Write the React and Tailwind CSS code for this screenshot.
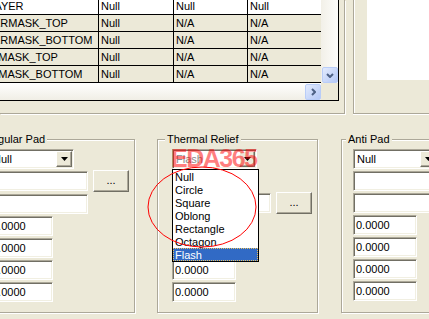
import React from 'react';

const sunken =
  'bg-white border border-t-[#aca899] border-l-[#aca899] border-r-white border-b-white shadow-[inset_1px_1px_0_#716f64,inset_-1px_-1px_0_#f1efe2]';
const raised =
  'bg-[#ece9d8] border border-t-white border-l-white border-r-[#716f64] border-b-[#716f64] shadow-[inset_-1px_-1px_0_#aca899]';

const rows = [
  { name: 'TOP LAYER', a: 'Null', b: 'Null', c: 'Null', selected: true },
  { name: 'SOLDERMASK_TOP', a: 'Null', b: 'N/A', c: 'N/A' },
  { name: 'SOLDERMASK_BOTTOM', a: 'Null', b: 'N/A', c: 'N/A' },
  { name: 'PASTEMASK_TOP', a: 'Null', b: 'N/A', c: 'N/A' },
  { name: 'PASTEMASK_BOTTOM', a: 'Null', b: 'N/A', c: 'N/A' },
];

const items = ['Null', 'Circle', 'Square', 'Oblong', 'Rectangle', 'Octagon', 'Flash'];

const ScrollBtn = ({ dir }) => (
  <div className="w-[16px] h-[16px] rounded-[2px] border border-[#b9cdf8] bg-gradient-to-br from-[#e3ebfd] to-[#b4c8f6] flex items-center justify-center">
    {dir === 'down' ? (
      <svg width="8" height="5" viewBox="0 0 8 5">
        <path d="M1 1L4 4L7 1" fill="none" stroke="#4d6185" strokeWidth="2" />
      </svg>
    ) : (
      <svg width="5" height="8" viewBox="0 0 5 8">
        <path d="M1 1L4 4L1 7" fill="none" stroke="#4d6185" strokeWidth="2" />
      </svg>
    )}
  </div>
);

const Combo = ({ value, gray, children }) => (
  <div className={`relative w-[85px] h-[20px] shrink-0 ${sunken} flex items-center pl-[3px]`}>
    <span className={gray ? 'text-[#8c8c8c]' : ''}>{value}</span>
    <div className={`absolute right-[1px] top-[1px] w-[16px] h-[16px] ${raised} flex items-center justify-center`}>
      <svg width="7" height="4" viewBox="0 0 7 4">
        <path d="M0 0H7L3.5 4Z" fill="#000" />
      </svg>
    </div>
    {children}
  </div>
);

const Field = ({ w, value }) => (
  <div className={`${w} h-[20px] shrink-0 ${sunken} flex items-center pl-[2px]`}>{value}</div>
);

const Dots = () => (
  <div className={`w-[36px] h-[22px] -mt-[1px] ml-[5px] shrink-0 ${raised} flex items-center justify-center pb-[2px]`}>
    ...
  </div>
);

const Group = ({ label, labelLeft, pad, gap, children }) => (
  <div
    className={`relative ${gap} w-[161px] h-[174px] shrink-0 border border-[#aca899] shadow-[inset_1px_1px_0_#fff,1px_1px_0_#fff] ${pad} pt-[9px] flex flex-col gap-[2px]`}
  >
    <span className={`absolute -top-[7px] ${labelLeft} px-[2px] bg-[#ece9d8] leading-[13px] whitespace-nowrap`}>
      {label}
    </span>
    {children}
  </div>
);

const Numbers = () => (
  <>
    <Field w="w-[64px]" value="0.0000" />
    <Field w="w-[64px]" value="0.0000" />
    <Field w="w-[64px]" value="0.0000" />
    <Field w="w-[64px]" value="0.0000" />
  </>
);

export default function App() {
  return (
    <div className="relative w-[429px] h-[319px] overflow-hidden bg-[#ece9d8] font-['Liberation_Sans',Arial,sans-serif] text-[11px] leading-none text-black">
      {/* top: layer table + preview */}
      <div className="flex h-[114px]">
        <div className="w-[345px] shrink-0 border-r border-b border-[#aca899] shadow-[1px_1px_0_#fff]">
          <div className="ml-[-40px] mt-[-3px] w-[379px] border border-black flex flex-col">
            <div className="flex h-[85px]">
              <div className="w-[360px]">
                {rows.map((r) => (
                  <div
                    key={r.name}
                    className={`flex h-[17px] border-b border-black ${r.selected ? 'bg-white' : 'bg-[#ece9d8]'}`}
                  >
                    <div className="w-[138px] border-r border-black pl-[2px] flex items-center whitespace-nowrap">{r.name}</div>
                    <div className="w-[75px] border-r border-black pl-[2px] flex items-center">{r.a}</div>
                    <div className="w-[74px] border-r border-black pl-[2px] flex items-center">{r.b}</div>
                    <div className="w-[73px] pl-[2px] flex items-center">{r.c}</div>
                  </div>
                ))}
              </div>
              <div className="w-[17px] pl-[1px] flex flex-col justify-end bg-gradient-to-r from-[#f2f0e8] to-[#fdfdfb]">
                <ScrollBtn dir="down" />
              </div>
            </div>
            <div className="flex h-[17px]">
              <div className="w-[360px] flex justify-end items-end bg-gradient-to-b from-white to-[#f0eee5]">
                <ScrollBtn dir="right" />
              </div>
              <div className="w-[17px]" />
            </div>
          </div>
        </div>
        <div className="ml-[8px] flex-1 border-l border-b border-[#aca899] shadow-[inset_1px_0_0_#fff,0_1px_0_#fff]">
          <div className="ml-[13px] h-[80px] bg-white" />
        </div>
      </div>

      {/* pad groups */}
      <div className="flex mt-[25px]">
        <Group label="Regular Pad" labelLeft="left-[7px]" pad="pl-[14px]" gap="ml-[-26px]">
          <Combo value="Null" />
          <div className="flex">
            <Field w="w-[99px]" />
            <Dots />
          </div>
          <Field w="w-[99px]" />
          <Numbers />
        </Group>

        <Group label="Thermal Relief" labelLeft="left-[7px]" pad="pl-[14px]" gap="ml-[22px]">
          <Combo value="Flash" gray>
            <span className="absolute left-[-2px] top-[-4px] z-20 text-[25px] font-bold tracking-[-1.5px] text-[rgba(255,0,0,0.5)] leading-none">
              EDA365
            </span>
            <div className="absolute left-[-1px] top-[19px] z-10 w-[87px] border border-black bg-white">
              {items.map((it) => (
                <div
                  key={it}
                  className={`h-[13px] leading-[12px] pl-[1px] border ${
                    it === 'Flash'
                      ? 'bg-[#316ac5] text-white border-dotted border-[#e8c060]'
                      : 'border-transparent'
                  }`}
                >
                  {it}
                </div>
              ))}
            </div>
          </Combo>
          <Field w="w-[85px]" />
          <div className="flex">
            <Field w="w-[99px]" />
            <Dots />
          </div>
          <Numbers />
        </Group>

        <Group label="Anti Pad" labelLeft="left-[4px]" pad="pl-[11px]" gap="ml-[23px]">
          <Combo value="Null" />
          <Field w="w-[99px]" />
          <Field w="w-[99px]" />
          <Numbers />
        </Group>
      </div>

      {/* red annotation ring */}
      <svg className="absolute left-[146px] top-[165px] z-30" width="112" height="84" viewBox="0 0 112 84">
        <ellipse cx="56" cy="42" rx="54" ry="40" fill="none" stroke="#ff0000" strokeWidth="1" />
      </svg>
    </div>
  );
}
